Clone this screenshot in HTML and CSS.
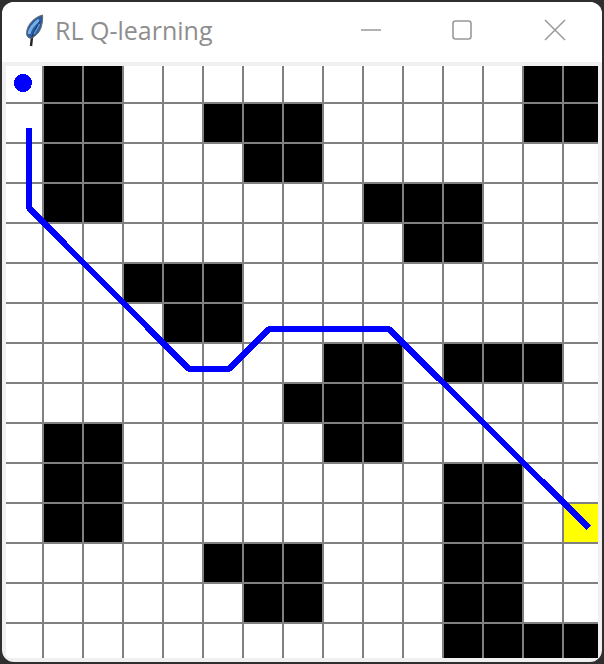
FILE: index.html
```html
<!DOCTYPE html>
<html lang="en">
<head>
<meta charset="utf-8">
<title>RL Q-learning</title>
<link rel="stylesheet" href="styles.css">
</head>
<body>
<div class="window">
  <header class="titlebar">
    <svg class="app-icon" width="24" height="34" viewBox="0 0 24 34">
      <path d="M8 33 L9 24" stroke="#222" stroke-width="2.4" fill="none"/>
      <path d="M19.5 2 C12 4 4 11 3.5 20 C3.5 23 5 25 8 25.5 C13 23 17 19 18.5 13 C19.5 9 20 5 19.5 2Z" fill="#2c5c9c" stroke="#6a6a6a" stroke-width="1"/>
      <path d="M16 7 C12 10 7 15 6 21" stroke="#74aeea" stroke-width="3" fill="none"/>
      <path d="M17 8 C14 13 11 18 9 24" stroke="#1c3c6c" stroke-width="1.2" fill="none"/>
      <path d="M16.5 11 C15 15 13 18 11 21" stroke="#5a98e0" stroke-width="1.4" fill="none"/>
    </svg>
    <span class="title">RL Q-learning</span>
    <div class="controls">
      <svg class="control" width="22" height="22" viewBox="0 0 22 22"><path d="M1 11H21" stroke="#999" stroke-width="1.6" fill="none"/></svg>
      <svg class="control" width="22" height="22" viewBox="0 0 22 22"><rect x="2" y="2" width="18" height="18" rx="2.5" stroke="#999" stroke-width="1.6" fill="none"/></svg>
      <svg class="control control-close" width="22" height="22" viewBox="0 0 22 22"><path d="M1 1L21 21M21 1L1 21" stroke="#999" stroke-width="1.5" fill="none"/></svg>
    </div>
  </header>
  <div class="client">
    <div class="board">
      <div class="grid">
        <i></i><b></b><b></b><i></i><i></i><i></i><i></i><i></i><i></i><i></i><i></i><i></i><i></i><b></b><b></b>
        <i></i><b></b><b></b><i></i><i></i><b></b><b></b><b></b><i></i><i></i><i></i><i></i><i></i><b></b><b></b>
        <i></i><b></b><b></b><i></i><i></i><i></i><b></b><b></b><i></i><i></i><i></i><i></i><i></i><i></i><i></i>
        <i></i><b></b><b></b><i></i><i></i><i></i><i></i><i></i><i></i><b></b><b></b><b></b><i></i><i></i><i></i>
        <i></i><i></i><i></i><i></i><i></i><i></i><i></i><i></i><i></i><i></i><b></b><b></b><i></i><i></i><i></i>
        <i></i><i></i><i></i><b></b><b></b><b></b><i></i><i></i><i></i><i></i><i></i><i></i><i></i><i></i><i></i>
        <i></i><i></i><i></i><i></i><b></b><b></b><i></i><i></i><i></i><i></i><i></i><i></i><i></i><i></i><i></i>
        <i></i><i></i><i></i><i></i><i></i><i></i><i></i><i></i><b></b><b></b><i></i><b></b><b></b><b></b><i></i>
        <i></i><i></i><i></i><i></i><i></i><i></i><i></i><b></b><b></b><b></b><i></i><i></i><i></i><i></i><i></i>
        <i></i><b></b><b></b><i></i><i></i><i></i><i></i><i></i><b></b><b></b><i></i><i></i><i></i><i></i><i></i>
        <i></i><b></b><b></b><i></i><i></i><i></i><i></i><i></i><i></i><i></i><i></i><b></b><b></b><i></i><i></i>
        <i></i><b></b><b></b><i></i><i></i><i></i><i></i><i></i><i></i><i></i><i></i><b></b><b></b><i></i><u></u>
        <i></i><i></i><i></i><i></i><i></i><b></b><b></b><b></b><i></i><i></i><i></i><b></b><b></b><i></i><i></i>
        <i></i><i></i><i></i><i></i><i></i><i></i><b></b><b></b><i></i><i></i><i></i><b></b><b></b><i></i><i></i>
        <i></i><i></i><i></i><i></i><i></i><i></i><i></i><i></i><i></i><i></i><i></i><b></b><b></b><b></b><b></b>
      </div>
      <svg class="route" width="592" height="592" viewBox="6 66 592 592">
        <circle cx="23" cy="83" r="9" fill="#0000ff"/>
        <path d="M29 128V208L189 369H229L269 329H389L589 528" fill="none" stroke="#0000ff" stroke-width="6" stroke-linejoin="bevel"/>
      </svg>
    </div>
  </div>
</div>
</body>
</html>
```
FILE: styles.css
```css
html, body {
  margin: 0;
  padding: 0;
  height: 100%;
  background: #2e2e2e;
  overflow: hidden;
}
.window {
  box-sizing: border-box;
  width: 600px;
  height: 660px;
  margin: 2px 0 0 2px;
  border-radius: 12px;
  overflow: hidden;
  background: #f0f0f0;
  display: flex;
  flex-direction: column;
}
.titlebar {
  height: 60px;
  flex: none;
  background: #fff;
  display: flex;
  align-items: center;
  padding: 0 0 4px 21px;
  box-sizing: border-box;
}
.app-icon { flex: none; margin-right: 8px; }
.title {
  font: 25px/32px "Open Sans", "Noto Sans", sans-serif;
  color: #8e8e8e;
}
.controls {
  margin-left: auto;
  display: flex;
  gap: 69px;
  padding-right: 36px;
}
.control-close { margin-left: 2px; }
.client {
  flex: none;
  padding: 4px 4px 3px 4px;
}
.board { position: relative; width: 592px; height: 592px; }
.grid {
  display: grid;
  grid-template-columns: 36px repeat(13, 38px) 34px;
  grid-template-rows: 36px repeat(13, 38px) 34px;
  gap: 2px;
  background: #808080;
  width: 592px;
  height: 592px;
}
.grid i { background: #fff; }
.grid b { background: #000; }
.grid u { background: #ffff00; }
.route {
  position: absolute;
  left: 0;
  top: 0;
  shape-rendering: crispEdges;
}
```
